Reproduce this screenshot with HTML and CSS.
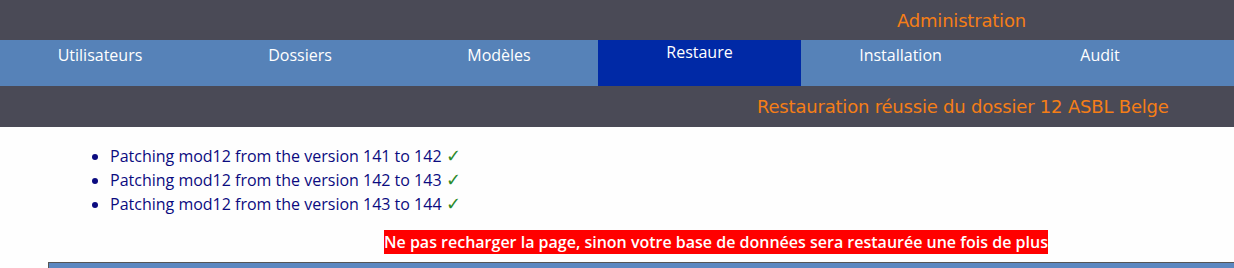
FILE: index.html
```html
<!DOCTYPE html>
<html>
<head>
    <meta charset="utf-8">
    <link rel="stylesheet" href="styles.css">
</head>
<body>
    <div class="top-bar">
        <h1 class="app-title">Administration</h1>
    </div>

    <div class="menu">
        <a class="menu-item">Utilisateurs</a>
        <a class="menu-item">Dossiers</a>
        <a class="menu-item">Modèles</a>
        <a class="menu-item active">Restaure</a>
        <a class="menu-item">Installation</a>
        <a class="menu-item">Audit</a>
    </div>

    <div class="sub-bar">
        <h2 class="page-title">Restauration réussie du dossier 12 ASBL Belge</h2>
    </div>

    <div class="content">
        <ul class="patch-list">
            <li>Patching mod12 from the version 141 to 142 <span class="ok">✓</span></li>
            <li>Patching mod12 from the version 142 to 143 <span class="ok">✓</span></li>
            <li>Patching mod12 from the version 143 to 144 <span class="ok">✓</span></li>
        </ul>

        <div class="warning-row">
            <span class="warning">Ne pas recharger la page, sinon votre base de données sera restaurée une fois de plus</span>
        </div>

        <div class="footer-bar"></div>
    </div>
</body>
</html>
```

FILE: styles.css
```css
body {
    margin: 0;
    font-family: 'Open Sans', 'Noto Sans', sans-serif;
    background: #fefefe;
    overflow: hidden;
}

.top-bar {
    height: 40px;
    background: #4a4a56;
    display: flex;
    align-items: center;
}

.app-title {
    margin: 0 0 0 897px;
    color: #f57e16;
    font-family: 'DejaVu Sans', sans-serif;
    font-weight: normal;
    font-size: 18px;
    letter-spacing: -0.2px;
}

.menu {
    height: 46px;
    background: #5682b8;
    display: grid;
    grid-template-columns: 200px 200px 198px 203px 199px 200px;
}

.menu-item {
    color: #ffffff;
    font-size: 16px;
    text-align: center;
    padding-top: 4px;
    cursor: pointer;
}

.menu-item.active {
    background: #0029a6;
    padding-top: 1px;
}

.sub-bar {
    height: 41px;
    background: #4a4a56;
    display: flex;
    align-items: center;
}

.page-title {
    margin: 0 0 0 757px;
    color: #f57e16;
    font-family: 'DejaVu Sans', sans-serif;
    font-weight: normal;
    font-size: 18px;
    letter-spacing: -0.2px;
}

.content {
    padding-top: 17px;
}

.patch-list {
    margin: 0;
    padding-left: 110px;
    color: #0b0b80;
    font-size: 16px;
    line-height: 24px;
}

.ok {
    color: #2a8a2a;
    font-size: 18px;
    line-height: 0;
}

.warning-row {
    margin-top: 15px;
    padding-left: 384px;
    line-height: 22px;
}

.warning {
    background: #ff0000;
    color: #ffffff;
    font-weight: 600;
    font-size: 16px;
    padding: 1px 0;
}

.footer-bar {
    margin: 9px 0 0 48px;
    height: 20px;
    background: #5b87c0;
    border-top: 1px solid #555555;
    border-left: 1px solid #555555;
}
```
